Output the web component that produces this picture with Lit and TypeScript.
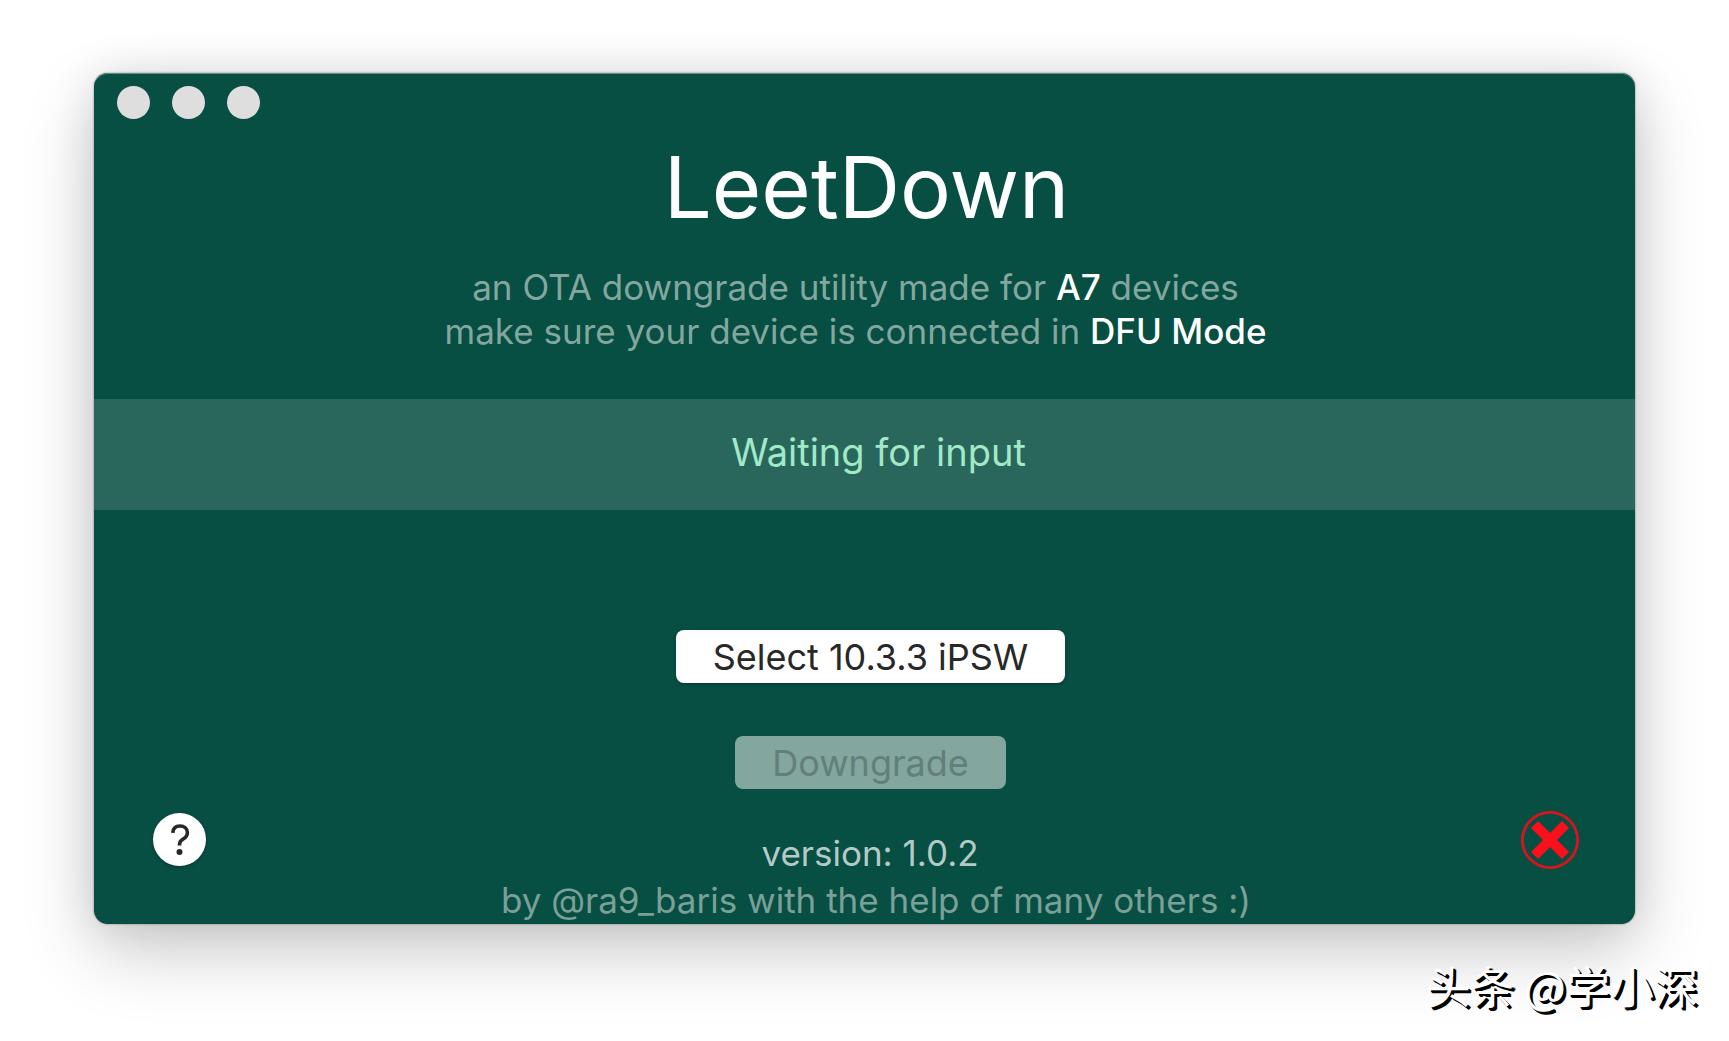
import { LitElement, html, css } from "lit";
import { customElement } from "lit/decorators.js";

@customElement("app-root")
export class AppRoot extends LitElement {
  static styles = css`
    :host {
      display: block;
      font-family: Inter, "Liberation Sans", sans-serif;
    }
    .desktop {
      box-sizing: border-box;
      position: relative;
      display: flex;
      min-height: 100vh;
      padding: 73px 94px 117px;
      background: #fff;
      overflow: hidden;
    }
    .window {
      flex: 1;
      display: flex;
      flex-direction: column;
      border-radius: 14px;
      background: #074e43;
      color: #83a79f;
      font-size: 35px;
      line-height: 44px;
      text-align: center;
      overflow: hidden;
      box-shadow: 0 0 2px rgba(0, 0, 0, 0.5), 0 28px 72px rgba(0, 0, 0, 0.2),
        0 0 44px rgba(0, 0, 0, 0.1), inset 0 1px 0 #5f8c83;
    }
    .titlebar {
      display: flex;
      gap: 22px;
      padding: 13px 23px 0;
    }
    .light {
      width: 33px;
      height: 33px;
      padding: 0;
      border: 0;
      border-radius: 50%;
      background: #dedede;
    }
    h1 {
      margin: 15px 0 0;
      padding-left: 4px;
      color: #fff;
      font-size: 85px;
      line-height: 108px;
      font-weight: 400;
    }
    .intro {
      display: flex;
      flex-direction: column;
      padding: 23px 18px 0 0;
    }
    p {
      margin: 0;
    }
    strong {
      color: #fff;
      font-weight: 500;
    }
    .status {
      margin-top: 46px;
      padding: 31px 0 36px 28px;
      background: #29675d;
      color: #a1e9c7;
      font-size: 38px;
    }
    .actions {
      display: flex;
      flex-direction: column;
      align-items: center;
      gap: 53px;
      padding: 120px 0 0 12px;
    }
    .push {
      height: 53px;
      padding: 0 37px;
      border: 0;
      border-radius: 8px;
      background: #fff;
      color: #282828;
      font: inherit;
      font-size: 36px;
      box-shadow: 0 1px 3px rgba(0, 0, 0, 0.3);
    }
    .push:disabled {
      background: #83a69f;
      color: #627f79;
      box-shadow: none;
    }
    .footer {
      display: flex;
      align-items: flex-start;
      justify-content: space-between;
      padding: 22px 56px 0 59px;
    }
    .credits {
      display: flex;
      flex-direction: column;
      gap: 3px;
      padding: 20px 0 0 25px;
    }
    .version {
      padding-right: 12px;
      color: #b4cac6;
    }
    .author {
      color: #7aa098;
    }
    .help {
      width: 53px;
      height: 53px;
      margin-top: 2px;
      padding: 0;
      border: 0;
      border-radius: 50%;
      background: #fff;
      box-shadow: 0 1px 3px rgba(0, 0, 0, 0.3);
    }
    .quit {
      width: 58px;
      height: 58px;
      padding: 0;
      border: 0;
      background: none;
    }
    svg {
      display: block;
      width: 100%;
      height: 100%;
    }
    .watermark {
      position: absolute;
      right: 31px;
      bottom: 24px;
      color: #fff;
      font: 400 44px/64px "Noto Sans CJK SC", sans-serif;
      text-shadow: 2px 2px 0 #000, 3px 3px 0 #000;
    }
  `;

  render() {
    return html`
      <div class="desktop">
        <main class="window">
          <div class="titlebar">
            <button class="light" aria-label="Close"></button>
            <button class="light" aria-label="Minimise"></button>
            <button class="light" aria-label="Zoom"></button>
          </div>
          <h1>LeetDown</h1>
          <div class="intro">
            <p>an OTA downgrade utility made for <strong>A7</strong> devices</p>
            <p>make sure your device is connected in <strong>DFU Mode</strong></p>
          </div>
          <div class="status" role="status">Waiting for input</div>
          <div class="actions">
            <button class="push">Select 10.3.3 iPSW</button>
            <button class="push" disabled>Downgrade</button>
          </div>
          <div class="footer">
            <button class="help" aria-label="Help">
              <svg viewBox="0 0 53 53" fill="none">
                <path d="M19.8 19.8C20 15.4 22.8 13 27 13c4.300 0 7.400 2.600 7.400 6.500 0 3-1.500 4.900-4.200 6.600-2.800 1.700-3.700 3-3.700 5.400v1" stroke="#282828" stroke-width="3.600"/>
                <circle cx="26.500" cy="39" r="3" fill="#282828"/>
              </svg>
            </button>
            <div class="credits">
              <p class="version">version: 1.0.2</p>
              <p class="author">by @ra9_baris with the help of many others :)</p>
            </div>
            <button class="quit" aria-label="Quit">
              <svg viewBox="0 0 58 58" fill="none">
                <circle cx="29" cy="29" r="27.600" stroke="#d8151f" stroke-width="2.800"/>
                <path d="M13.500 13.500 44.500 44.500M44.500 13.500 13.500 44.500" stroke="#fa0f1c" stroke-width="10"/>
              </svg>
            </button>
          </div>
        </main>
        <div class="watermark" lang="zh-CN">头条 @学小深</div>
      </div>
    `;
  }
}
